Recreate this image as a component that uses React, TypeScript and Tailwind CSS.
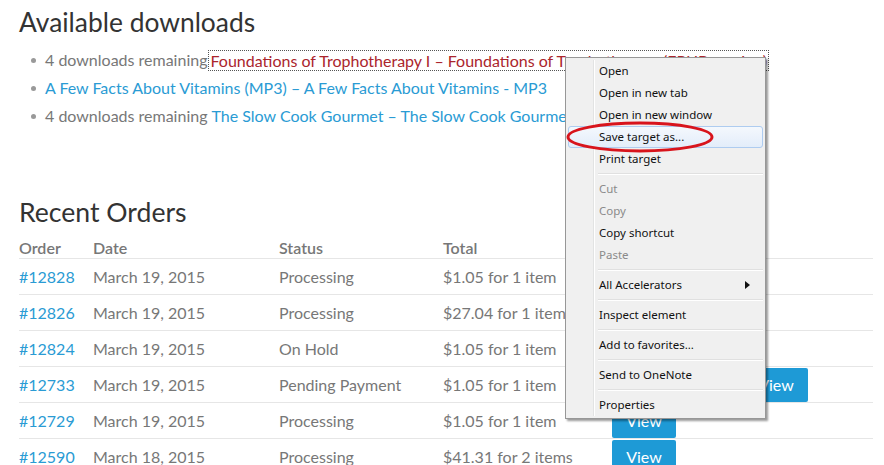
import React from 'react';

const orders = [
    { id: '#12828', date: 'March 19, 2015', status: 'Processing', total: '$1.05 for 1 item', action: 'view' },
    { id: '#12826', date: 'March 19, 2015', status: 'Processing', total: '$27.04 for 1 item', action: 'view' },
    { id: '#12824', date: 'March 19, 2015', status: 'On Hold', total: '$1.05 for 1 item', action: 'view' },
    { id: '#12733', date: 'March 19, 2015', status: 'Pending Payment', total: '$1.05 for 1 item', action: 'pay' },
    { id: '#12729', date: 'March 19, 2015', status: 'Processing', total: '$1.05 for 1 item', action: 'view' },
    { id: '#12590', date: 'March 18, 2015', status: 'Processing', total: '$41.31 for 2 items', action: 'view' },
];

type MenuItem = { label: string; disabled?: boolean; sub?: boolean; hover?: boolean } | 'sep';

const menu: MenuItem[] = [
    { label: 'Open' },
    { label: 'Open in new tab' },
    { label: 'Open in new window' },
    { label: 'Save target as...', hover: true },
    { label: 'Print target' },
    'sep',
    { label: 'Cut', disabled: true },
    { label: 'Copy', disabled: true },
    { label: 'Copy shortcut' },
    { label: 'Paste', disabled: true },
    'sep',
    { label: 'All Accelerators', sub: true },
    'sep',
    { label: 'Inspect element' },
    'sep',
    { label: 'Add to favorites...' },
    'sep',
    { label: 'Send to OneNote' },
    'sep',
    { label: 'Properties' },
];

const ViewButton: React.FC<{ label?: string; className?: string }> = ({ label = 'View', className = '' }) => (
    <span className={`inline-flex items-center justify-center h-[34px] w-[64px] rounded-[2px] bg-[#1e9ad6] text-white text-[16px] ${className}`}>
        {label}
    </span>
);

const ContextMenu: React.FC = () => (
    <div className="absolute left-[565px] top-[57px] w-[201px] bg-[#f0f0f0] border border-[#979797] shadow-[2px_2px_2px_rgba(0,0,0,0.4)] py-[2px] px-[2px] font-['Noto_Sans','DejaVu_Sans',sans-serif] text-[11.5px] text-[#111]">
        <div className="absolute left-[27px] top-[2px] bottom-[2px] w-px bg-[#e2e3e3]"></div>
        <div className="absolute left-[28px] top-[2px] bottom-[2px] w-px bg-white"></div>
        {menu.map((item, i) =>
            item === 'sep' ? (
                <div key={i} className="h-[8px] flex flex-col justify-center pl-[30px]">
                    <div className="h-px bg-[#e0e0e0]"></div>
                    <div className="h-px bg-white"></div>
                </div>
            ) : (
                <div
                    key={i}
                    className={`relative h-[22px] flex items-center pl-[30px] pr-[10px] rounded-[3px] ${
                        item.hover ? 'border border-[#aeccf0] bg-gradient-to-b from-[#f4f8fd] to-[#e3edfa]' : 'border border-transparent'
                    } ${item.disabled ? 'text-[#8a8a8a]' : ''}`}
                >
                    <span className="flex-1">{item.label}</span>
                    {item.sub && (
                        <svg width="5" height="8" viewBox="0 0 5 8" className="mr-[2px]">
                            <path d="M0 0 L5 4 L0 8 Z" fill="#111" />
                        </svg>
                    )}
                </div>
            )
        )}
    </div>
);

export default function App() {
    return (
        <div className="relative w-[884px] h-[465px] overflow-hidden bg-white font-['Lato','Noto_Sans',sans-serif] text-[#777]">
            <div className="px-[19px] pt-[6px] w-[873px]">
                <h2 className="text-[26.4px] leading-[32px] text-[#333]">Available downloads</h2>
                <ul className="mt-[8px] text-[16px]">
                    <li className="flex items-center h-[28px]">
                        <span className="ml-[12px] mr-[9px] size-[5px] rounded-full bg-[#999]"></span>
                        <span>4 downloads remaining</span>
                        <span className="ml-[2px] px-[1px] leading-[19px] outline-1 outline-dotted outline-[#555] text-[#ab252c] whitespace-nowrap">
                            Foundations of Trophotherapy I – Foundations of Trophotherapy (EPUB version)
                        </span>
                    </li>
                    <li className="flex items-center h-[28px]">
                        <span className="ml-[12px] mr-[9px] size-[5px] rounded-full bg-[#999]"></span>
                        <span className="text-[#2a9bd4]">A Few Facts About Vitamins (MP3) – A Few Facts About Vitamins - MP3</span>
                    </li>
                    <li className="flex items-center h-[28px]">
                        <span className="ml-[12px] mr-[9px] size-[5px] rounded-full bg-[#999]"></span>
                        <span>4 downloads remaining</span>
                        <span className="ml-[4px] text-[#2a9bd4] whitespace-nowrap">The Slow Cook Gourmet – The Slow Cook Gourmet</span>
                    </li>
                </ul>

                <h2 className="mt-[66px] text-[26.6px] leading-[32px] text-[#333]">Recent Orders</h2>
                <div className="mt-[10px] w-[854px] text-[16px]">
                    <div className="flex h-[20px] items-center font-semibold text-[#777]">
                        <div className="w-[74px]">Order</div>
                        <div className="w-[186px]">Date</div>
                        <div className="w-[164px]">Status</div>
                        <div className="w-[169px]">Total</div>
                        <div className="flex-1"></div>
                    </div>
                    {orders.map((o) => (
                        <div key={o.id} className="flex h-[36px] items-center border-t border-[#e6e6e6]">
                            <div className="w-[74px] text-[#2a9bd4]">{o.id}</div>
                            <div className="w-[186px]">{o.date}</div>
                            <div className="w-[164px]">{o.status}</div>
                            <div className="w-[169px] whitespace-nowrap">{o.total}</div>
                            <div className="flex-1 flex items-center">
                                {o.action === 'pay' ? (
                                    <>
                                        <ViewButton label="Pay" />
                                        <ViewButton className="ml-[68px]" />
                                    </>
                                ) : (
                                    <ViewButton />
                                )}
                            </div>
                        </div>
                    ))}
                </div>
            </div>

            <ContextMenu />

            <svg className="absolute left-[564px] top-[120px]" width="152" height="34" viewBox="0 0 152 34">
                <ellipse cx="76" cy="17" rx="72" ry="14" fill="none" stroke="#d8141c" strokeWidth="3" />
            </svg>
        </div>
    );
}
